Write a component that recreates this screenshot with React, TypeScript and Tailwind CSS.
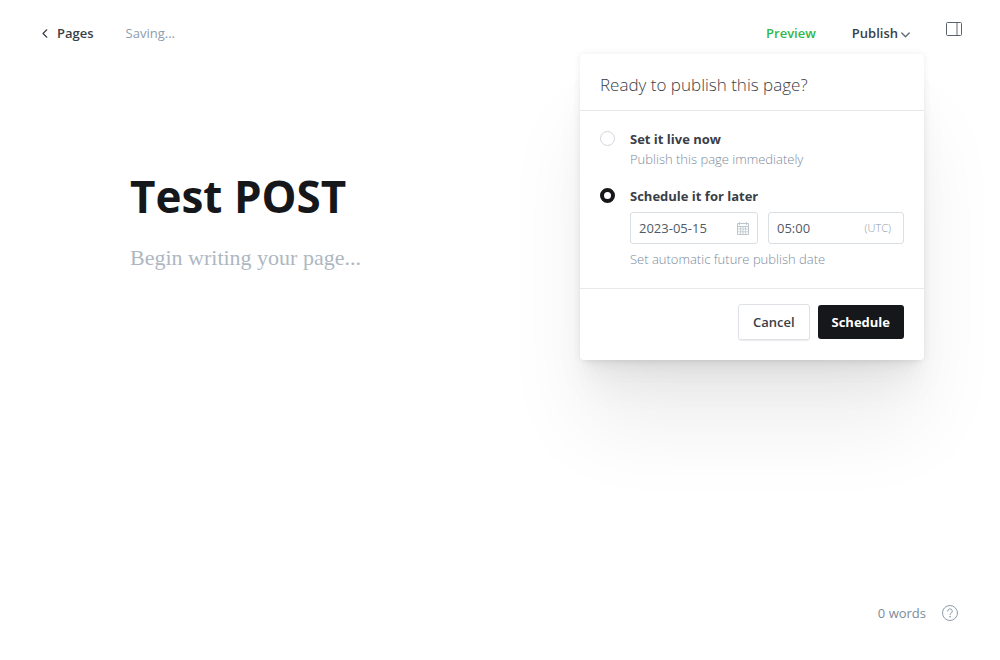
import { useState } from "react";

function ChevronLeft() {
  return (
    <svg aria-hidden="true" viewBox="0 0 6 9" className="h-[9px] w-[6px]" fill="none" stroke="currentColor" strokeWidth="1.2" strokeLinecap="round" strokeLinejoin="round">
      <path d="M4.8 0.8 1 4.5l3.8 3.7" />
    </svg>
  );
}

function ChevronDown() {
  return (
    <svg aria-hidden="true" viewBox="0 0 9 6" className="mt-1 h-[6px] w-[9px] text-[#626d79]" fill="none" stroke="currentColor" strokeWidth="1.4" strokeLinecap="round" strokeLinejoin="round">
      <path d="M0.8 1 4.5 4.8 8.2 1" />
    </svg>
  );
}

function SidebarIcon() {
  return (
    <svg aria-hidden="true" viewBox="0 0 16 14" className="h-[14px] w-4" fill="none" stroke="#5a626b" strokeWidth="1">
      <rect x="0.5" y="0.5" width="15" height="13" rx="1" />
      <path d="M11 0.5v13" strokeOpacity="0.8" strokeWidth="1.2" />
    </svg>
  );
}

function CalendarIcon() {
  return (
    <svg aria-hidden="true" viewBox="0 0 12 13" className="h-[13px] w-3" fill="none" stroke="#bdc6ce" strokeWidth="1">
      <path d="M0.5 1.5h11v11H0.5z" />
      <path d="M0.5 4.5h11" />
      <path d="M0.5 7h11M0.5 9.8h11M3.5 4.5v8M6 4.5v8M8.5 4.5v8" strokeOpacity="0.8" />
      <path d="M2.5 0v3M9.5 0v3" />
    </svg>
  );
}

function HelpIcon() {
  return (
    <svg aria-hidden="true" viewBox="0 0 16 16" className="size-4" fill="none" stroke="#8e9cac" strokeWidth="1" strokeLinecap="round" strokeLinejoin="round">
      <circle cx="8" cy="8" r="7.5" />
      <path d="M5.7 6.2a2.3 2.3 0 1 1 3.2 2.1c-.6.3-.9.7-.9 1.3" />
      <circle cx="8" cy="11.8" r="0.3" />
    </svg>
  );
}

const radioClass =
  "mt-[2px] size-[15px] shrink-0 appearance-none rounded-full border border-[#cfd7de] bg-white checked:border-4 checked:border-[#15171a]";

const labelClass = "block font-bold";

const hintClass = "font-light text-[#7c8b9a]";

function PublishMenu() {
  const [mode, setMode] = useState("schedule");
  return (
    <form
      onSubmit={(event) => event.preventDefault()}
      className="absolute top-full right-[-14px] z-10 mt-[11px] w-[344px] rounded-[4px] bg-white text-[13px] leading-5 text-[#394047] shadow-[0_0_7px_rgba(0,0,0,0.08),0_5px_5px_-5px_rgba(0,0,0,0.03),0_10px_10px_-5px_rgba(0,0,0,0.03),0_17px_18px_-5px_rgba(0,0,0,0.03),0_32px_33px_-5px_rgba(0,0,0,0.04),0_70px_80px_-5px_rgba(0,0,0,0.07)]"
    >
      <h2 className="border-b border-[#e6e9eb] px-5 pt-[19px] pb-[13px] text-[17px] leading-6 font-light">Ready to publish this page?</h2>
      <div className="flex flex-col gap-[17px] border-b border-[#e6e9eb] px-5 pt-[18px] pb-[19px]">
        <div className="flex gap-[15px]">
          <input id="live" type="radio" name="mode" checked={mode === "live"} onChange={() => setMode("live")} className={radioClass} />
          <div>
            <label htmlFor="live" className={labelClass}>Set it live now</label>
            <p className={hintClass}>Publish this page immediately</p>
          </div>
        </div>
        <div className="flex gap-[15px]">
          <input id="schedule" type="radio" name="mode" checked={mode === "schedule"} onChange={() => setMode("schedule")} className={radioClass} />
          <div className="min-w-0 flex-1">
            <label htmlFor="schedule" className={labelClass}>Schedule it for later</label>
            <div className="mt-[6px] mb-[5px] flex gap-[10px] text-[#4f5a66]">
              <div className="flex h-8 w-32 shrink-0 items-center rounded-[3px] border border-[#dadfe3] px-2">
                <input aria-label="Publish date" defaultValue="2023-05-15" className="min-w-0 flex-1 outline-none" />
                <CalendarIcon />
              </div>
              <div className="flex h-8 min-w-0 flex-1 items-center rounded-[3px] border border-[#dadfe3] pr-3 pl-2">
                <input aria-label="Publish time" defaultValue="05:00" className="min-w-0 flex-1 outline-none" />
                <span className="text-[11px] font-light text-[#8e9cac]">(UTC)</span>
              </div>
            </div>
            <p className={hintClass}>Set automatic future publish date</p>
          </div>
        </div>
      </div>
      <div className="flex justify-end gap-2 px-5 pt-[15px] pb-5">
        <button type="button" className="h-9 rounded-[3px] border border-[#dfe3e7] px-[14px] font-semibold shadow-[0_1px_1px_rgba(0,0,0,0.08)]">Cancel</button>
        <button type="submit" className="mt-px h-[34px] rounded-[3px] bg-[#15171a] px-[14px] font-bold text-white">Schedule</button>
      </div>
    </form>
  );
}

export default function App() {
  return (
    <div className="flex min-h-screen flex-col bg-white font-['Open_Sans',sans-serif] text-[13px] leading-5 text-[#394047]">
      <header className="flex items-start justify-between pt-[22px] pr-[38px] pl-[42px]">
        <div className="flex items-center gap-8 pt-px">
          <a href="#pages" className="flex items-center gap-[9px] font-semibold">
            <ChevronLeft />
            Pages
          </a>
          <span className="text-[#8e9cac]">Saving...</span>
        </div>
        <div className="flex items-start gap-9">
          <div className="flex gap-9 pt-px">
            <button type="button" className="font-semibold text-[#30b84a]">Preview</button>
            <div className="relative">
              <button type="button" aria-expanded="true" className="flex items-center gap-[3px] font-semibold">
                Publish
                <ChevronDown />
              </button>
              <PublishMenu />
            </div>
          </div>
          <button type="button" aria-label="Settings">
            <SidebarIcon />
          </button>
        </div>
      </header>
      <main className="flex-1 px-[130px] pt-[120px]">
        <h1 className="text-[44px] leading-[66px] font-bold text-[#15171a]">Test POST</h1>
        <p className="mt-[13px] font-['Liberation_Serif',serif] text-[22px] leading-8 text-[#aeb7c1]">Begin writing your page...</p>
      </main>
      <footer className="flex items-center justify-end gap-4 pr-[42px] pb-[37px] text-[#7c8b9a]">
        <span>0 words</span>
        <button type="button" aria-label="Help">
          <HelpIcon />
        </button>
      </footer>
    </div>
  );
}
